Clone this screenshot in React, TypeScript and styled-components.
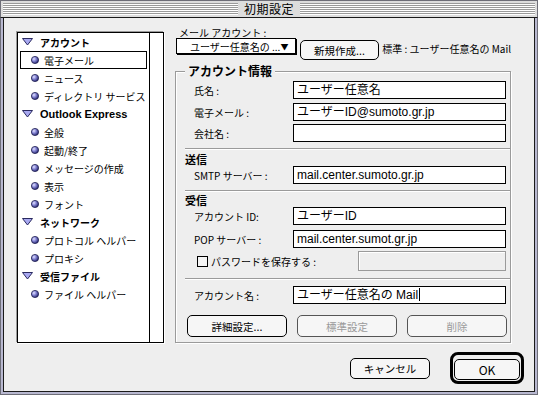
import styled, { createGlobalStyle } from 'styled-components'

const GlobalStyle = createGlobalStyle`
  html, body {
    margin: 0;
    padding: 0;
    background: #ffffff;
  }
  body {
    font-family: "Noto Sans CJK JP", "Noto Sans", sans-serif;
    color: #000000;
  }
  * {
    box-sizing: border-box;
  }
`

// ウィンドウ枠
const Window = styled.div`
  width: 538px;
  height: 395px;
  display: flex;
  flex-direction: column;
`

const TitleBar = styled.div`
  height: 18px;
  display: flex;
  align-items: center;
  gap: 6px;
  padding: 0 2px;
  background: #dddddd;
  border: 1px solid #6e6e78;
  border-bottom: 1px solid #1a1a1a;
`

const Stripes = styled.div`
  flex: 1;
  height: 12px;
  background: repeating-linear-gradient(to bottom, #9a9a9a 0 1px, #ffffff 1px 2px);
`

const Title = styled.span`
  font-size: 12px;
  line-height: 16px;
  letter-spacing: 0.5px;
`

const Frame = styled.div`
  flex: 1;
  display: flex;
  border: 1px solid #6e6e78;
  border-top: none;
  padding: 0 2px 2px;
  background: #b8b8d0;
`

const Body = styled.div`
  flex: 1;
  display: flex;
  flex-direction: column;
  background: #eeeeee;
  border: 1px solid #1a1a1a;
  border-top: none;
`

const MainRow = styled.div`
  display: flex;
  align-items: flex-start;
  gap: 11px;
  padding-left: 13px;
`

// 左側のリスト
const Sidebar = styled.div`
  margin-top: 14px;
  width: 147px;
  height: 311px;
  display: flex;
  background: #ffffff;
  border: 1px solid #000000;
  box-shadow: -1px -1px 0 #9a9a9a, 1px 1px 0 #ffffff;
`

const ItemList = styled.ul`
  flex: 1;
  margin: 0;
  padding: 0;
  list-style: none;
`

const HeaderItem = styled.li<{ $latin?: boolean }>`
  height: 18px;
  display: flex;
  align-items: center;
  gap: 7px;
  padding-left: 4px;
  font-size: ${p => (p.$latin ? '11px' : '10px')};
  font-family: ${p =>
    p.$latin ? '"Liberation Sans", "Noto Sans CJK JP", sans-serif' : 'inherit'};
  font-weight: bold;
  white-space: nowrap;
`

const ChildItem = styled.li<{ $selected?: boolean }>`
  height: 18px;
  margin: 0 2px;
  display: flex;
  align-items: center;
  gap: 5px;
  padding-left: 10px;
  font-size: 10px;
  white-space: nowrap;
  border: 1px solid ${p => (p.$selected ? '#000000' : 'transparent')};
`

const ScrollTrack = styled.div`
  width: 15px;
  border-left: 1px solid #000000;
  background: #ffffff;
`

// 右側のパネル
const RightPanel = styled.div`
  margin-top: 9px;
  width: 336px;
  display: flex;
  flex-direction: column;
`

const AccountLabel = styled.div`
  padding-left: 4px;
  font-size: 10px;
  line-height: 11px;
  height: 11px;
  white-space: nowrap;
`

const AccountRow = styled.div`
  display: flex;
  align-items: flex-start;
  height: 22px;
`

const Popup = styled.div`
  margin-left: 1px;
  width: 120px;
  height: 16px;
  display: flex;
  align-items: center;
  justify-content: space-between;
  padding: 0 7px 0 13px;
  background: #ffffff;
  border: 1px solid #000000;
  box-shadow: 1px 1px 0 #000000;
  font-size: 10px;
  white-space: nowrap;
  overflow: hidden;
`

const PopupArrow = styled.span`
  font-size: 8px;
`

const PushButton = styled.button<{ $w: number; $h?: number }>`
  width: ${p => p.$w}px;
  height: ${p => p.$h ?? 22}px;
  padding: 0;
  font-family: inherit;
  font-size: 10.5px;
  color: #000000;
  background: #f6f6f6;
  border: 1px solid #000000;
  border-radius: 5px;
  white-space: nowrap;
  &:disabled {
    color: #9a9a9a;
    border-color: #555555;
  }
`

const NewButton = styled(PushButton)`
  margin: 2px 0 0 4px;
`

const DefaultText = styled.span`
  margin: 5px 0 0 3px;
  font-size: 10px;
  line-height: 12px;
  white-space: nowrap;
`

const Group = styled.fieldset`
  margin: 4px 0 0;
  min-width: 0;
  padding: 0 0 5px 9px;
  border: 1px solid #9a9a9a;
  box-shadow: 1px 1px 0 #ffffff, inset 1px 1px 0 #ffffff;
`

const Legend = styled.legend`
  padding: 0 3px;
  font-size: 12px;
  line-height: 14px;
  font-weight: bold;
  background: #eeeeee;
`

const FieldRow = styled.div<{ $top: number }>`
  display: flex;
  align-items: center;
  height: 18px;
  margin-top: ${p => p.$top}px;
`

const FieldLabel = styled.span`
  width: 108px;
  padding-left: 9px;
  font-size: 10px;
  white-space: nowrap;
`

const TextField = styled.div`
  width: 213px;
  height: 18px;
  padding: 0 3px;
  background: #ffffff;
  border: 1px solid #000000;
  font-family: "Liberation Sans", "Noto Sans CJK JP", sans-serif;
  font-size: 12px;
  line-height: 16px;
  white-space: nowrap;
  overflow: hidden;
`

const Caret = styled.span`
  display: inline-block;
  width: 1px;
  height: 13px;
  margin-left: 1px;
  background: #000000;
  vertical-align: -2px;
`

const Separator = styled.div<{ $top: number }>`
  height: 2px;
  margin-top: ${p => p.$top}px;
  border-top: 1px solid #9a9a9a;
  border-bottom: 1px solid #ffffff;
`

const SectionHeading = styled.div<{ $top: number }>`
  margin-top: ${p => p.$top}px;
  font-size: 11px;
  line-height: 13px;
  font-weight: bold;
`

const CheckRow = styled.div`
  display: flex;
  align-items: center;
  height: 20px;
  margin-top: 3px;
  padding-left: 12px;
`

const CheckBox = styled.span`
  width: 11px;
  height: 11px;
  background: #f4f4f4;
  border: 1px solid #000000;
`

const CheckLabel = styled.span`
  margin-left: 3px;
  font-size: 10px;
  white-space: nowrap;
`

const DisabledField = styled.div`
  margin-left: auto;
  margin-right: 4px;
  width: 148px;
  height: 20px;
  background: #eeeeee;
  border: 1px solid #9a9a9a;
  box-shadow: inset 1px 1px 0 #ffffff;
`

const GroupButtons = styled.div`
  display: grid;
  grid-template-columns: repeat(3, 100px);
  gap: 10px;
  margin-top: 11px;
  padding-left: 2px;
`

// 下部ボタン
const Footer = styled.div`
  display: flex;
  justify-content: flex-end;
  align-items: center;
  gap: 20px;
  margin-top: 9px;
  padding-right: 10px;
`

const DefaultRing = styled.div`
  padding: 1px;
  border: 3px solid #000000;
  border-radius: 8px;
`

const OkButton = styled(PushButton)`
  font-size: 12px;
`

const Triangle = () => (
  <svg width="11" height="8" viewBox="0 0 11 8">
    <polygon points="0.5,0.5 10.5,0.5 5.5,7" fill="#a8a8f0" stroke="#2a2a60" strokeWidth="1" />
  </svg>
)

const Bullet = () => (
  <svg width="8" height="8" viewBox="0 0 8 8">
    <defs>
      <radialGradient id="bl" cx="35%" cy="35%" r="65%">
        <stop offset="0%" stopColor="#e4e4ff" />
        <stop offset="45%" stopColor="#8a8ad8" />
        <stop offset="100%" stopColor="#2e2e78" />
      </radialGradient>
    </defs>
    <circle cx="4" cy="4" r="3.6" fill="url(#bl)" stroke="#202050" strokeWidth="0.8" />
  </svg>
)

type ListEntry = { label: string; header?: boolean; latin?: boolean; selected?: boolean }

const LIST_ITEMS: ListEntry[] = [
  { label: 'アカウント', header: true },
  { label: '電子メール', selected: true },
  { label: 'ニュース' },
  { label: 'ディレクトリ サービス' },
  { label: 'Outlook Express', header: true, latin: true },
  { label: '全般' },
  { label: '起動/終了' },
  { label: 'メッセージの作成' },
  { label: '表示' },
  { label: 'フォント' },
  { label: 'ネットワーク', header: true },
  { label: 'プロトコル ヘルパー' },
  { label: 'プロキシ' },
  { label: '受信ファイル', header: true },
  { label: 'ファイル ヘルパー' },
]

const App = () => {
  return (
    <>
      <GlobalStyle />
      <Window>
        <TitleBar>
          <Stripes />
          <Title>初期設定</Title>
          <Stripes />
        </TitleBar>
        <Frame>
          <Body>
            <MainRow>
              <Sidebar>
                <ItemList>
                  {LIST_ITEMS.map(el =>
                    el.header ? (
                      <HeaderItem key={el.label} $latin={el.latin}>
                        <Triangle />
                        <span>{el.label}</span>
                      </HeaderItem>
                    ) : (
                      <ChildItem key={el.label} $selected={el.selected}>
                        <Bullet />
                        <span>{el.label}</span>
                      </ChildItem>
                    ),
                  )}
                </ItemList>
                <ScrollTrack />
              </Sidebar>
              <RightPanel>
                <AccountLabel>メール アカウント :</AccountLabel>
                <AccountRow>
                  <Popup>
                    <span>ユーザー任意名の ...</span>
                    <PopupArrow>▼</PopupArrow>
                  </Popup>
                  <NewButton type="button" $w={80} $h={20}>
                    新規作成...
                  </NewButton>
                  <DefaultText>標準 :  ユーザー任意名の Mail</DefaultText>
                </AccountRow>
                <Group>
                  <Legend>アカウント情報</Legend>
                  <FieldRow $top={3}>
                    <FieldLabel>氏名 :</FieldLabel>
                    <TextField>ユーザー任意名</TextField>
                  </FieldRow>
                  <FieldRow $top={4}>
                    <FieldLabel>電子メール :</FieldLabel>
                    <TextField>ユーザーID@sumoto.gr.jp</TextField>
                  </FieldRow>
                  <FieldRow $top={3}>
                    <FieldLabel>会社名 :</FieldLabel>
                    <TextField />
                  </FieldRow>
                  <Separator $top={6} />
                  <SectionHeading $top={3}>送信</SectionHeading>
                  <FieldRow $top={0}>
                    <FieldLabel>SMTP サーバー :</FieldLabel>
                    <TextField>mail.center.sumoto.gr.jp</TextField>
                  </FieldRow>
                  <Separator $top={6} />
                  <SectionHeading $top={2}>受信</SectionHeading>
                  <FieldRow $top={0}>
                    <FieldLabel>アカウント ID:</FieldLabel>
                    <TextField>ユーザーID</TextField>
                  </FieldRow>
                  <FieldRow $top={5}>
                    <FieldLabel>POP サーバー :</FieldLabel>
                    <TextField>mail.center.sumot.gr.jp</TextField>
                  </FieldRow>
                  <CheckRow>
                    <CheckBox />
                    <CheckLabel>パスワードを保存する :</CheckLabel>
                    <DisabledField />
                  </CheckRow>
                  <Separator $top={7} />
                  <FieldRow $top={6}>
                    <FieldLabel>アカウント名 :</FieldLabel>
                    <TextField>
                      ユーザー任意名の Mail
                      <Caret />
                    </TextField>
                  </FieldRow>
                  <GroupButtons>
                    <PushButton type="button" $w={100}>
                      詳細設定...
                    </PushButton>
                    <PushButton type="button" $w={100} disabled>
                      標準設定
                    </PushButton>
                    <PushButton type="button" $w={100} disabled>
                      削除
                    </PushButton>
                  </GroupButtons>
                </Group>
              </RightPanel>
            </MainRow>
            <Footer>
              <PushButton type="button" $w={80} $h={21}>
                キャンセル
              </PushButton>
              <DefaultRing>
                <OkButton type="button" $w={66} $h={21}>
                  OK
                </OkButton>
              </DefaultRing>
            </Footer>
          </Body>
        </Frame>
      </Window>
    </>
  )
}

export default App
